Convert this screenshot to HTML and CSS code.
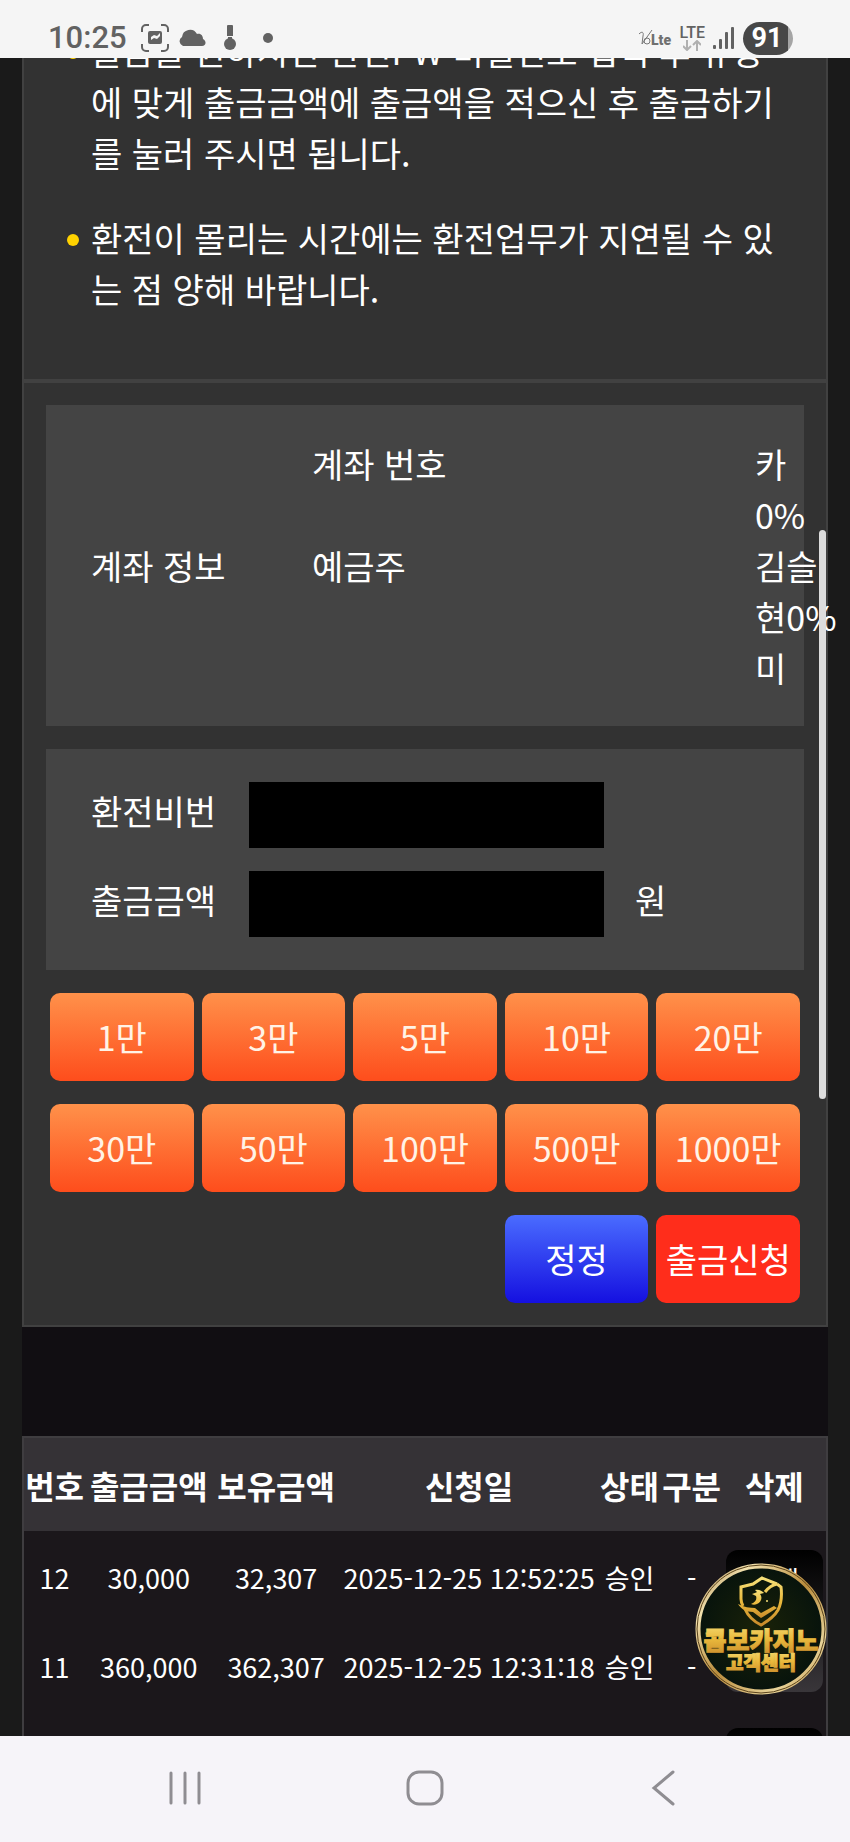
FILE: index.html
```
<!DOCTYPE html>
<html lang="ko">
<head>
    <meta charset="UTF-8">
    <meta name="viewport" content="width=device-width, initial-scale=1.0">
    <title>출금신청</title>
    <link rel="stylesheet" href="styles.css">
</head>
<body>

<header class="status-bar">
    <span class="clock">10:25</span>
    <svg class="capture-icon" width="28" height="28" viewBox="0 0 28 28" fill="none" stroke="#626262" stroke-width="2">
        <path d="M1 8V5a4 4 0 0 1 4-4h3M20 1h3a4 4 0 0 1 4 4v3M27 20v3a4 4 0 0 1-4 4h-3M8 27H5a4 4 0 0 1-4-4v-3"/>
        <path d="M9 7h10a2 2 0 0 1 2 2v9a2 2 0 0 1-2 2H9a2 2 0 0 1-2-2V9a2 2 0 0 1 2-2z" fill="#626262" stroke="none"/>
        <path d="M10 13l3-2 3 1 3-3v3l-3 3-3-1-3 2z" fill="#f5f5f5" stroke="none"/>
    </svg>
    <svg width="28" height="18" viewBox="0 0 28 18" fill="#626262">
        <path d="M5 17a5 5 0 0 1-1-9 8 8 0 0 1 15-3c4-1 6 2 6 5 4 2 3 7-1 7z"/>
    </svg>
    <svg class="thermo-icon" width="12" height="26" viewBox="0 0 12 26" fill="#626262">
        <path d="M4 0h4a1 1 0 0 1 1 1v10H3V1a1 1 0 0 1 1-1z"/>
        <circle cx="6" cy="19" r="6"/>
        <path d="M4 12h4v4H4z"/>
    </svg>
    <span class="dot"></span>
    <div class="status-right">
        <svg width="34" height="20" viewBox="0 0 34 20">
            <path d="M1 6c3-3 5-2 4 2L4 16 14 2" fill="none" stroke="#777" stroke-width="1"/>
            <circle cx="9" cy="13" r="3" fill="none" stroke="#777" stroke-width="1"/>
            <text x="13" y="17" class="volte-text">Lte</text>
        </svg>
        <div class="lte">
            <span>LTE</span>
            <svg width="18" height="11" viewBox="0 0 18 11" fill="none" stroke="#b0b0b0" stroke-width="2">
                <path d="M4 0v10M0 6l4 4 4-4M14 11V1M10 5l4-4 4 4"/>
            </svg>
        </div>
        <svg width="22" height="24" viewBox="0 0 22 24" fill="#626262">
            <rect x="0" y="19" width="3" height="4" rx="1"/>
            <rect x="6" y="13" width="3" height="10" rx="1"/>
            <rect x="12" y="6" width="3" height="17" rx="1"/>
            <rect x="18" y="1" width="3" height="22" rx="1"/>
        </svg>
        <span class="battery">91</span>
    </div>
</header>

<main class="page">
    <section class="panel">
        <ul class="notice">
            <li>출금을 원하시면 환전PW 비밀번호 입력 후 유형에 맞게 출금금액에 출금액을 적으신 후 출금하기를 눌러 주시면 됩니다.</li>
            <li>환전이 몰리는 시간에는 환전업무가 지연될 수 있는 점 양해 바랍니다.</li>
        </ul>

        <form class="withdraw-form">
            <div class="box account">
                <span>계좌 정보</span>
                <div class="account-names">
                    <span>계좌 번호</span>
                    <span>예금주</span>
                </div>
                <div class="account-values">카<br>0%<br>김슬<br>현0%<br>미</div>
            </div>

            <div class="box fields">
                <label for="pin">환전비번</label>
                <input type="password" id="pin">
                <span></span>
                <label for="amount">출금금액</label>
                <input type="text" id="amount">
                <span>원</span>
            </div>

            <div class="buttons">
                <button type="button">1만</button>
                <button type="button">3만</button>
                <button type="button">5만</button>
                <button type="button">10만</button>
                <button type="button">20만</button>
                <button type="button">30만</button>
                <button type="button">50만</button>
                <button type="button">100만</button>
                <button type="button">500만</button>
                <button type="button">1000만</button>
                <button type="reset" class="reset">정정</button>
                <button type="submit" class="submit">출금신청</button>
            </div>
        </form>
    </section>

    <table class="history">
        <colgroup>
            <col class="col-no">
            <col class="col-amount">
            <col class="col-amount">
            <col class="col-date">
            <col class="col-state">
            <col class="col-state">
            <col class="col-delete">
        </colgroup>
        <thead>
            <tr>
                <th>번호</th>
                <th>출금금액</th>
                <th>보유금액</th>
                <th>신청일</th>
                <th>상태</th>
                <th>구분</th>
                <th>삭제</th>
            </tr>
        </thead>
        <tbody>
            <tr>
                <td>12</td>
                <td>30,000</td>
                <td>32,307</td>
                <td>2025-12-25 12:52:25</td>
                <td>승인</td>
                <td>-</td>
                <td rowspan="2" class="delete-cell"><button type="button" class="delete">삭제</button></td>
            </tr>
            <tr>
                <td>11</td>
                <td>360,000</td>
                <td>362,307</td>
                <td>2025-12-25 12:31:18</td>
                <td>승인</td>
                <td>-</td>
            </tr>
            <tr>
                <td colspan="6"></td>
                <td class="delete-cell"><button type="button" class="delete" aria-label="삭제"></button></td>
            </tr>
        </tbody>
    </table>

    <div class="scroll-thumb"></div>

    <a href="#" class="support">
        <svg viewBox="0 0 132 132">
            <defs>
                <linearGradient id="gold" x1="0" y1="0" x2="0" y2="1">
                    <stop offset="0" stop-color="#f6e07a"/>
                    <stop offset="0.5" stop-color="#e9b93c"/>
                    <stop offset="1" stop-color="#c98a2b"/>
                </linearGradient>
                <linearGradient id="ring" x1="0" y1="0" x2="1" y2="1">
                    <stop offset="0" stop-color="#8f6a35"/>
                    <stop offset="0.2" stop-color="#f3e2ae"/>
                    <stop offset="0.5" stop-color="#b98c3c"/>
                    <stop offset="0.8" stop-color="#e8d49a"/>
                    <stop offset="1" stop-color="#b5822c"/>
                </linearGradient>
                <radialGradient id="disc">
                    <stop offset="0" stop-color="#1a2208"/>
                    <stop offset="1" stop-color="#07130c"/>
                </radialGradient>
            </defs>
            <circle cx="66" cy="66" r="63" fill="url(#disc)" stroke="url(#ring)" stroke-width="5"/>
            <circle cx="66" cy="66" r="64" fill="none" stroke="#5a431c" stroke-width="1"/>
            <g fill="none" stroke="url(#gold)" stroke-width="3">
                <path d="M82 21l-15-6-9 6-12 3v12c0 3 1 5 2 7M82 21l4 3c1 8 0 17-3 23-4 7-10 11-17 15-8-4-13-9-16-16M82 21c-5 1-9 4-12 8"/>
            </g>
            <path d="M60 27c4-1 7 1 9 3l-4 1c3 4 1 8-3 10-2 1-4 1-6 0 5-2 6-5 5-8l-4-2c2-1 4-1 5-2zM43 41c6 3 12 4 17 4l6 5 13-7 3 2-16 10-8-6c-7 0-12-3-15-8z" fill="url(#gold)"/>
            <circle cx="72" cy="38" r="1" fill="#f6e07a"/>
            <text x="66" y="87" class="badge-title">콤보카지노</text>
            <text x="66" y="107" class="badge-sub">고객센터</text>
        </svg>
    </a>
</main>

<nav class="nav-bar">
    <button type="button" aria-label="최근 앱">
        <svg width="34" height="36" viewBox="0 0 34 36" stroke="#8f8d92" stroke-width="3" stroke-linecap="round">
            <path d="M3 3v30M17 3v30M31 3v30"/>
        </svg>
    </button>
    <button type="button" aria-label="홈">
        <svg width="38" height="36" viewBox="0 0 38 36" fill="none" stroke="#8f8d92" stroke-width="3">
            <rect x="2" y="2" width="34" height="32" rx="11"/>
        </svg>
    </button>
    <button type="button" aria-label="뒤로">
        <svg width="34" height="36" viewBox="0 0 34 36" fill="none" stroke="#8f8d92" stroke-width="3" stroke-linecap="round">
            <path d="M25 2L6 18l19 16"/>
        </svg>
    </button>
</nav>

</body>
</html>
```

FILE: styles.css
```
* {
    box-sizing: border-box;
}

body {
    margin: 0;
    height: 100vh;
    display: flex;
    flex-direction: column;
    background-color: #1a1a1a;
    color: #fff;
    font-family: 'Noto Sans CJK KR', sans-serif;
    font-size: 34px;
    line-height: 51px;
}

button, input {
    font-family: inherit;
    font-size: inherit;
    color: inherit;
    border: none;
    margin: 0;
    padding: 0;
}

/* status bar */
.status-bar {
    flex: none;
    height: 58px;
    padding: 18px 57px 0 48px;
    display: flex;
    align-items: center;
    background-color: #f5f5f5;
    color: #626262;
    font-family: Roboto, sans-serif;
    line-height: 32px;
}

.clock {
    font-size: 31px;
    font-weight: 500;
    margin-right: 14px;
}

.capture-icon {
    margin-right: 9px;
}

.thermo-icon {
    margin: 0 27px 0 18px;
}

.dot {
    width: 10px;
    height: 10px;
    border-radius: 50%;
    background-color: #626262;
}

.status-right {
    margin-left: auto;
    display: flex;
    align-items: center;
    gap: 8px;
}

.volte-text {
    font-size: 14px;
    font-weight: 900;
    fill: #707070;
}

.lte {
    display: flex;
    flex-direction: column;
    align-items: center;
    font-size: 16px;
    font-weight: 500;
    line-height: 15px;
}

.battery {
    width: 50px;
    height: 33px;
    padding-right: 2px;
    border-radius: 17px;
    background: linear-gradient(to right, #474747 45px, #a5a5a5 45px);
    color: #fff;
    font-size: 27px;
    font-weight: 700;
    line-height: 33px;
    text-align: center;
}

/* page */
.page {
    flex: 1;
    min-height: 0;
    position: relative;
    overflow: hidden;
    padding: 0 22px;
    background: linear-gradient(to right, #1a1a1a 22px, #110e12 22px, #110e12 calc(100% - 22px), #1a1a1a calc(100% - 22px));
}

.panel {
    margin-top: -35px;
    border: 2px solid #414141;
    background-color: #323232;
}

.notice {
    margin: 0;
    padding: 0 47px 65px 67px;
    list-style: none;
    border-bottom: 4px solid #414141;
}

.notice li {
    position: relative;
    margin-bottom: 34px;
    word-break: break-all;
}

.notice li:last-child {
    margin-bottom: 0;
}

.notice li::before {
    content: "";
    position: absolute;
    left: -24px;
    top: 22px;
    width: 12px;
    height: 12px;
    border-radius: 50%;
    background-color: #ffd200;
}

.withdraw-form {
    padding: 22px;
    display: flex;
    flex-direction: column;
    gap: 23px;
}

.box {
    background-color: #444;
    padding: 33px 0 33px 45px;
}

.account {
    display: grid;
    grid-template-columns: 221fr 443fr 49fr;
    align-items: center;
}

.account > * {
    min-width: 0;
}

.account-names {
    align-self: start;
    display: flex;
    flex-direction: column;
    gap: 51px;
}

.account-values {
    white-space: nowrap;
}

.fields {
    display: grid;
    grid-template-columns: 158fr 355fr 200fr;
    row-gap: 23px;
}

.fields span {
    padding-left: 31px;
}

.fields label, .fields span {
    height: 58px;
    line-height: 58px;
}

.fields input {
    width: 100%;
    height: 66px;
    padding: 0 16px;
    background-color: #000;
}

.buttons {
    padding: 0 4px;
    display: grid;
    grid-template-columns: repeat(5, 1fr);
    gap: 23px 8px;
}

.buttons button {
    height: 88px;
    padding-bottom: 2px;
    border-radius: 10px;
    background-image: linear-gradient(#ff914a, #fe4d1c);
    color: #fff3e6;
    white-space: nowrap;
    cursor: pointer;
}

.buttons .reset {
    grid-column: 4;
    background-image: linear-gradient(#4a6cff, #1510e0);
    color: #fff;
}

.buttons .submit {
    background-image: none;
    background-color: #ff2d1b;
    color: #fff;
}

/* history */
.history {
    width: 100%;
    margin-top: 109px;
    table-layout: fixed;
    border-collapse: separate;
    border-spacing: 0;
    border: 2px solid #3f3d40;
    background-color: #1b171b;
    font-size: 27px;
    text-align: center;
    white-space: nowrap;
}

.history th {
    height: 93px;
    padding: 2px 0 0;
    background-color: #353236;
    font-size: 32px;
}

.history td {
    height: 89px;
    padding: 4px 0 0;
}

.col-no {
    width: 61px;
}

.col-amount {
    width: 127px;
}

.col-date {
    width: 258px;
}

.col-state {
    width: 62px;
}

.col-delete {
    width: 103px;
}

.history .delete-cell {
    padding: 19px 3px 0 3px;
    vertical-align: top;
}

.delete {
    display: block;
    width: 100%;
    height: 142px;
    padding-bottom: 84px;
    border-radius: 12px;
    background-image: linear-gradient(#000, #39363a);
}

.scroll-thumb {
    position: absolute;
    top: 472px;
    right: 24px;
    width: 7px;
    height: 569px;
    border-radius: 4px;
    background-color: #ddd;
}

.support {
    position: absolute;
    right: 23px;
    bottom: 41px;
    width: 132px;
    height: 132px;
}

.support svg {
    display: block;
}

.badge-title, .badge-sub {
    font-weight: 900;
    text-anchor: middle;
    fill: url(#gold);
    stroke: url(#gold);
    stroke-width: 1px;
}

.badge-title {
    font-size: 25px;
}

.badge-sub {
    font-size: 19px;
}

/* nav bar */
.nav-bar {
    flex: none;
    height: 106px;
    padding: 0 66px 2px;
    display: flex;
    justify-content: space-around;
    align-items: center;
    background-color: #f6f4f9;
}

.nav-bar button {
    background: none;
    line-height: 0;
}
```
